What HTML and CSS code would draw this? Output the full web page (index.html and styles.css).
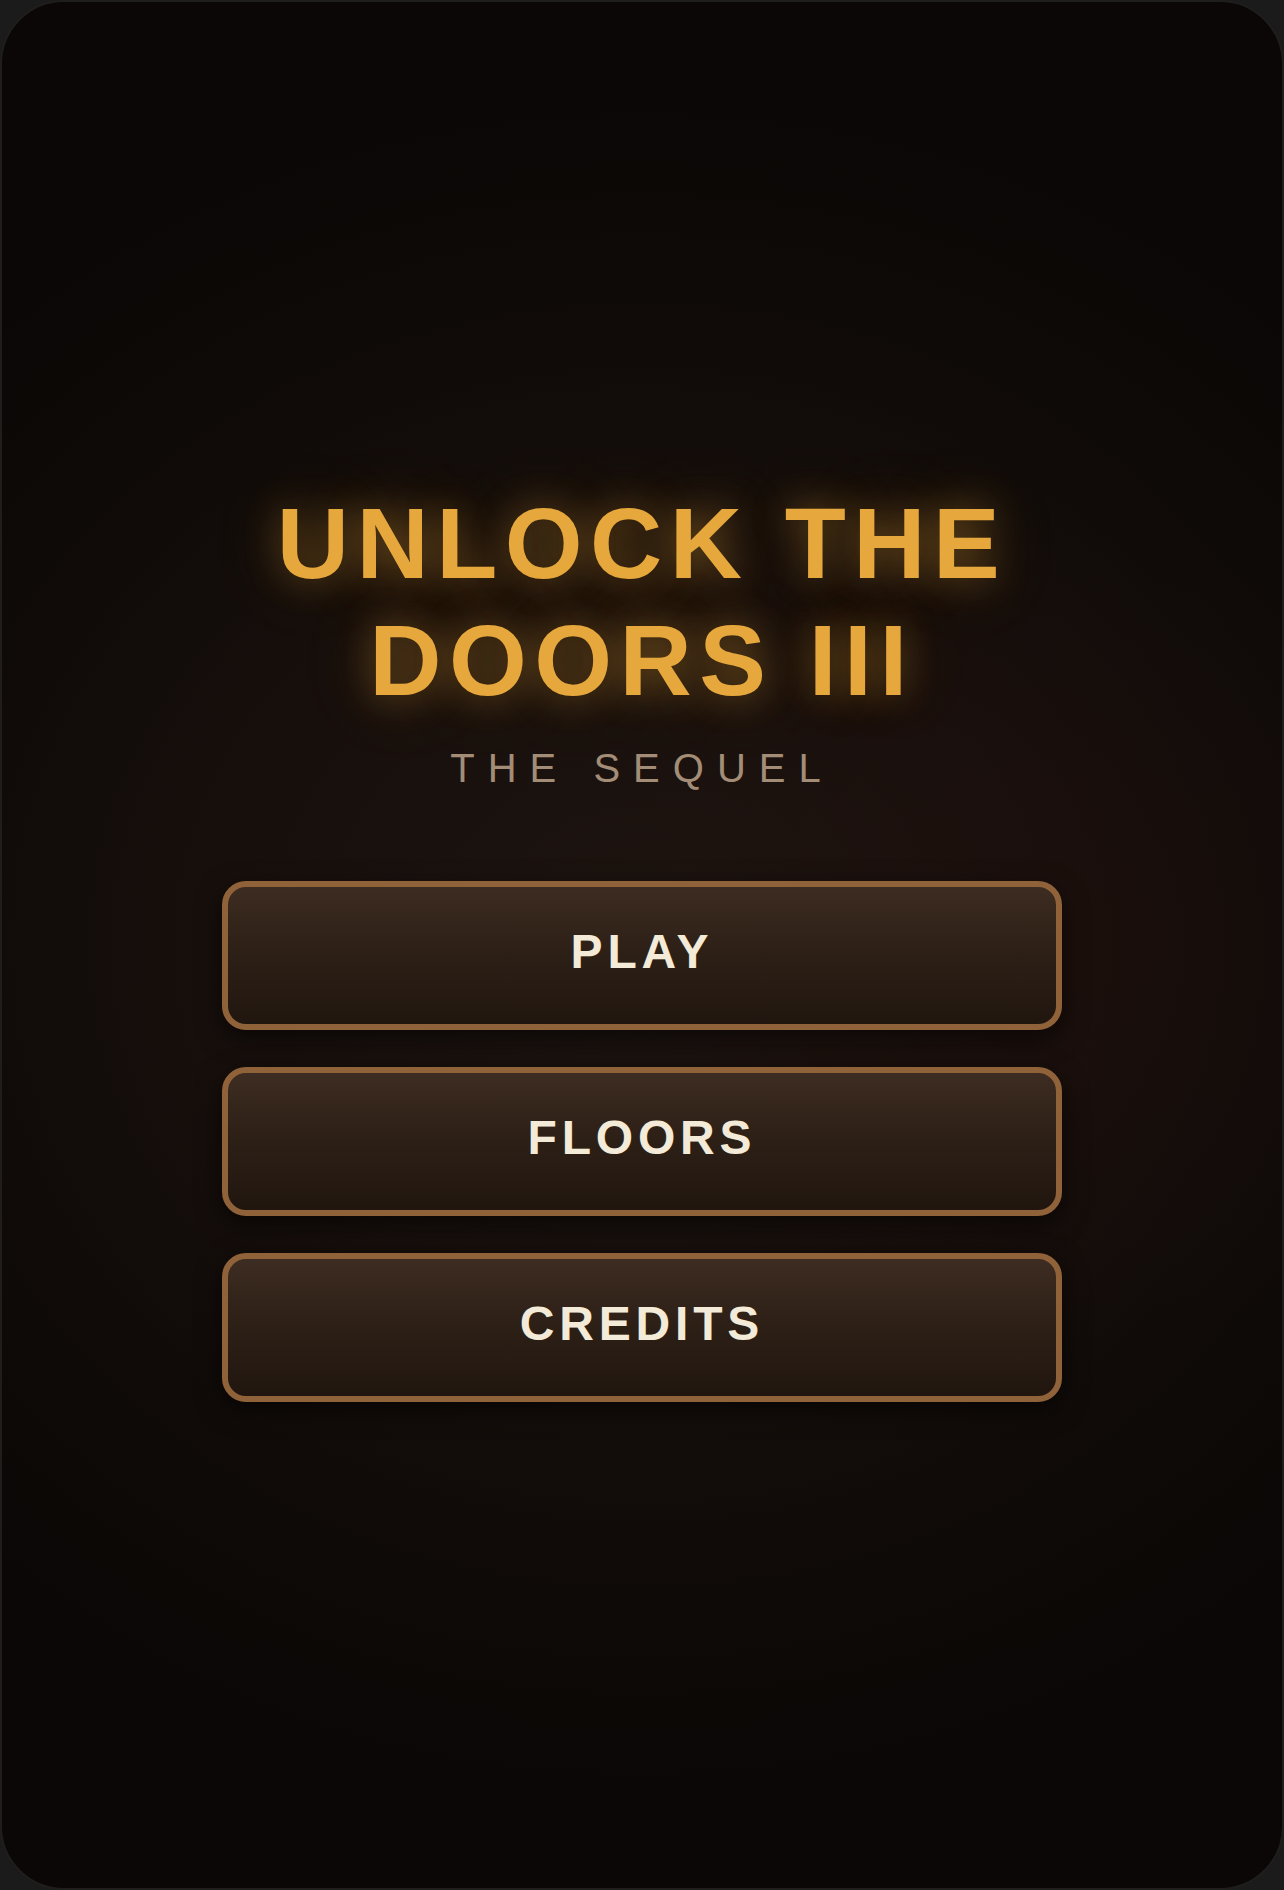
FILE: index.html
```html
<!DOCTYPE html>
<html lang="en">
<head>
<meta charset="utf-8">
<title>Unlock the Doors III</title>
<link rel="stylesheet" href="styles.css">
</head>
<body>
<main class="screen">
  <h1 class="title">UNLOCK THE<br>DOORS III</h1>
  <p class="subtitle">THE SEQUEL</p>
  <nav class="menu">
    <button class="menu-btn" type="button">PLAY</button>
    <button class="menu-btn" type="button">FLOORS</button>
    <button class="menu-btn" type="button">CREDITS</button>
  </nav>
</main>
</body>
</html>
```

FILE: styles.css
```css
html, body {
  margin: 0;
  padding: 0;
}

body {
  background: #1b1b1b;
  font-family: "Liberation Sans", Arial, sans-serif;
}

.screen {
  box-sizing: border-box;
  width: 1284px;
  height: 1890px;
  border-radius: 64px;
  border: 2px solid #201e1d;
  overflow: hidden;
  display: flex;
  flex-direction: column;
  align-items: center;
  justify-content: center;
  padding-bottom: 4px;
  background:
    radial-gradient(ellipse 35% 22% at 82% 50%, rgba(40, 16, 12, 0.25) 0%, rgba(40, 16, 12, 0) 100%),
    radial-gradient(ellipse 75% 45% at 50% 50%, #1d1410 0%, #170f0c 45%, #0c0907 85%, #0a0706 100%);
}

.title {
  margin: 0;
  font-size: 100px;
  line-height: 117px;
  font-weight: 700;
  letter-spacing: 7.5px;
  text-align: center;
  color: #e6a83c;
  text-shadow:
    0 0 36px rgba(230, 165, 55, 0.42),
    0 0 80px rgba(230, 165, 55, 0.2);
}

.subtitle {
  margin: 26px 0 0;
  font-size: 40px;
  line-height: 46px;
  font-weight: 400;
  letter-spacing: 13px;
  color: #a38d76;
}

.menu {
  margin-top: 90px;
  display: flex;
  flex-direction: column;
  gap: 37px;
}

.menu-btn {
  box-sizing: border-box;
  width: 840px;
  height: 149px;
  padding: 0 0 8px;
  border: 6px solid #906239;
  border-radius: 24px;
  background: linear-gradient(180deg, #3d2c21 0%, #2c1f16 50%, #21160f 100%);
  box-shadow: 0 8px 26px rgba(0, 0, 0, 0.6);
  color: #f3ead8;
  font-family: "Liberation Sans", Arial, sans-serif;
  font-size: 48px;
  font-weight: 700;
  letter-spacing: 4.8px;
  display: flex;
  align-items: center;
  justify-content: center;
  cursor: pointer;
}
```
